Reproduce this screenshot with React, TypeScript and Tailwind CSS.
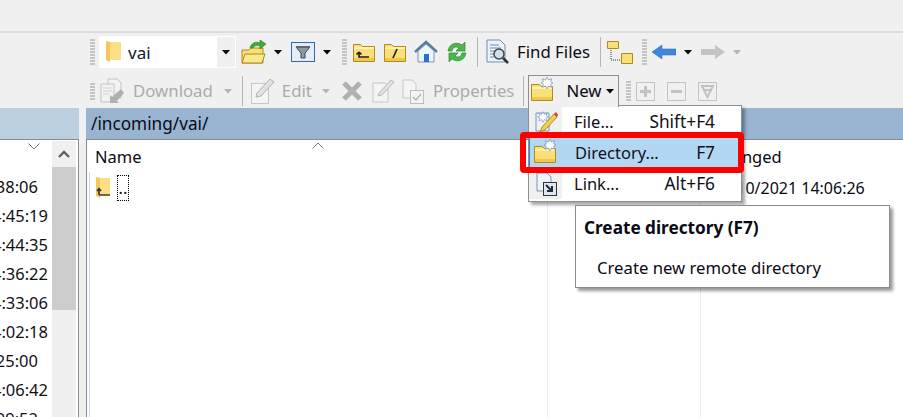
import React from "react";

const Y = { fill: "#f9e27f", stroke: "#b08a1e" };

function Gripper({ h = 26, cls = "" }: { h?: number; cls?: string }) {
  const n = Math.floor(h / 3);
  return (
    <div className={"flex flex-col gap-[1px] w-[5px] shrink-0 " + cls}>
      {Array.from({ length: n }).map((_, i) => (
        <div key={i} className="h-[2px] w-[5px] bg-[#c4c4c4]" />
      ))}
    </div>
  );
}
const Caret = ({ cls = "", dis = false }: { cls?: string; dis?: boolean }) => (
  <svg width="8" height="5" viewBox="0 0 8 5" className={"shrink-0 " + cls}>
    <path d="M0 0h8L4 4.500z" fill={dis ? "#b4b4b4" : "#000"} />
  </svg>
);
const Sep = ({ cls = "" }: { cls?: string }) => <div className={"w-[1px] h-[30px] bg-[#b5b5b5] shrink-0 " + cls} />;

function YFolder({ w = 22, h = 19, cls = "", children }: { w?: number; h?: number; cls?: string; children?: React.ReactNode }) {
  return (
    <svg width={w} height={h} viewBox="0 0 22 19" className={"shrink-0 " + cls}>
      <path d="M.5 18.500V1.500h7l2 2h12v15z" fill="#f8df78" stroke={Y.stroke} />
      <rect x="1" y="4" width="20" height="2" fill="#fff2b0" />
      <rect x="1" y="15" width="20" height="3" fill="#efc94f" />
      {children}
    </svg>
  );
}
const Win = ({ cls = "" }: { cls?: string }) => (
  <svg width="15" height="22" viewBox="0 0 15 22" className={"shrink-0 " + cls}>
    <path d="M3 1h12v18H3z" fill="#fcdf85" />
    <path d="M0 0l4 1v20l-4-2z" fill="#f4c65c" />
  </svg>
);
const Star = ({ x, y, s = 1 }: { x: number; y: number; s?: number }) => (
  <path
    transform={`translate(${x} ${y}) scale(${s})`}
    d="M0-7L1.800-3.500 5.500-5 4.200-1.500 7 0 4.200 1.500 5.500 5 1.800 3.500 0 7-1.800 3.500-5.500 5-4.200 1.500-7 0-4.200-1.500-5.500-5-1.800-3.500z"
    fill="#fff"
    stroke="#7c93b6"
    strokeWidth="0.9"
  />
);
const NewFolder = ({ cls = "" }: { cls?: string }) => (
  <svg width="24" height="26" viewBox="0 0 24 26" className={"shrink-0 " + cls}>
    <path d="M.5 24.500V8.500h8l2 2h11v14z" fill="#f8df78" stroke={Y.stroke} />
    <rect x="1" y="11" width="20" height="2" fill="#fff2b0" />
    <rect x="1" y="21" width="20" height="3" fill="#efc94f" />
    <Star x={16} y={7} s={0.85} />
  </svg>
);
const DisBox = ({ children, cls = "" }: { children: React.ReactNode; cls?: string }) => (
  <svg width="19" height="19" viewBox="0 0 19 19" className={"shrink-0 " + cls}>
    <rect x=".5" y=".5" width="18" height="18" fill="#f0f0f0" stroke="#c2c2c2" />
    {children}
  </svg>
);

function Row1() {
  return (
    <div className="flex items-center h-[38px] pl-[90px]">
      <Gripper h={27} />
      <div className="ml-[4px] w-[137px] h-[32px] bg-white flex items-center border border-white">
        <Win cls="ml-[6px]" />
        <span className="ml-[7px] text-[17px] leading-none text-[#101828]">vai</span>
        <div className="ml-auto w-[18px] h-full bg-[#f0f0f0] flex items-center justify-center">
          <Caret />
        </div>
      </div>
      <svg width="25" height="24" viewBox="0 0 25 24" className="ml-[5px] shrink-0">
        <path d="M1 23V10h7l2-2h12v15z" fill="#f8df78" stroke={Y.stroke} />
        <path d="M1 23l3-9h20l-3 9z" fill="#fbe88f" stroke={Y.stroke} />
        <path d="M9 8c1-5 6-7 10-5V0l6 4-6 5V6c-4-1-6 0-7 2z" fill="#43a83c" stroke="#2b7d27" strokeWidth=".6" />
      </svg>
      <Caret cls="ml-[8px]" />
      <svg width="24" height="20" viewBox="0 0 24 20" className="ml-[9px] shrink-0">
        <rect x=".5" y=".5" width="23" height="19" fill="#e4ecf6" stroke="#2f6cb5" />
        <path d="M5 5h14l-5 6v5h-4v-5z" fill="#8d9aa6" stroke="#3d4650" />
        <rect x="5" y="4" width="14" height="2" fill="#5d6873" />
      </svg>
      <Caret cls="ml-[8px]" />
      <Gripper h={27} cls="ml-[11px]" />
      <YFolder cls="ml-[6px]">
        <path d="M6 9v5h10M6 9l-2.500 2.500M6 9l2.500 2.500" stroke="#222" strokeWidth="1.700" fill="none" />
      </YFolder>
      <YFolder cls="ml-[9px]">
        <path d="M9 15l4-9" stroke="#222" strokeWidth="1.700" />
      </YFolder>
      <svg width="24" height="24" viewBox="0 0 24 24" className="ml-[8px] shrink-0">
        <path d="M1 12L12 2l11 10" fill="none" stroke="#5b7a9c" strokeWidth="2.500" />
        <path d="M4 11l8-7 8 7v11H4z" fill="#eef4fb" stroke="#7c93b0" />
        <rect x="10" y="14" width="5" height="8" fill="#2a6fd0" />
      </svg>
      <svg width="22" height="24" viewBox="0 0 22 24" className="ml-[8px] shrink-0">
        <path d="M2 11C3 4 10 1 16 5l3-3v9h-9l3-3C10 6 7 7 6 11z" fill="#4cb84a" stroke="#2a8a2e" strokeWidth=".7" />
        <path d="M20 13c-1 7-8 10-14 6l-3 3v-9h9l-3 3c3 2 6 1 7-3z" fill="#4cb84a" stroke="#2a8a2e" strokeWidth=".7" />
      </svg>
      <Sep cls="ml-[9px]" />
      <svg width="24" height="26" viewBox="0 0 24 26" className="ml-[8px] shrink-0">
        <path d="M1 1h13l5 5v17H1z" fill="#eef3fa" stroke="#6e8cb5" />
        <path d="M4 6h9M4 9h11M4 12h5M4 15h4M4 18h4" stroke="#6e8cb5" />
        <circle cx="13" cy="15" r="5" fill="#cfe0ee" stroke="#444" strokeWidth="1.500" />
        <path d="M17 19l5 5" stroke="#333" strokeWidth="2.500" />
      </svg>
      <span className="ml-[7px] text-[16.800px] leading-none text-[#0c0c14] whitespace-nowrap">Find Files</span>
      <Sep cls="ml-[10px]" />
      <svg width="26" height="25" viewBox="0 0 26 25" className="ml-[6px] shrink-0">
        <path d="M.5 1.500h11v7h-11z" fill="#f8df78" stroke={Y.stroke} />
        <path d="M14.500 13.500h11v10h-11z" fill="#f8df78" stroke={Y.stroke} />
        <path d="M4 10v10h9" fill="none" stroke="#333" strokeDasharray="1 1" />
      </svg>
      <Gripper h={27} cls="ml-[9px]" />
      <svg width="24" height="16" viewBox="0 0 24 16" className="ml-[5px] shrink-0">
        <path d="M0 8l10-7v4h14v6H10v4z" fill="#3f86e0" stroke="#2b62b0" strokeWidth=".5" />
      </svg>
      <Caret cls="ml-[8px]" />
      <svg width="24" height="16" viewBox="0 0 24 16" className="ml-[9px] shrink-0">
        <path d="M24 8l-10-7v4H0v6h14v4z" fill="#c4c4c4" />
      </svg>
      <Caret dis cls="ml-[8px]" />
    </div>
  );
}

function Row2() {
  return (
    <div className="flex items-center h-[37px] pl-[90px] pt-[3px] relative">
      <Gripper h={20} />
      <svg width="24" height="26" viewBox="0 0 24 26" className="ml-[5px] shrink-0">
        <path d="M8 1h9l4 4v15H8z" fill="#f2f2f2" stroke="#c2c2c2" />
        <path d="M1 6h13v18H1z" fill="#f2f2f2" stroke="#c2c2c2" />
        <path d="M3 10h9M3 13h9M3 16h6" stroke="#cfcfcf" />
        <path d="M21 11l-9 8-2-2v8h9l-2-2 7-8z" fill="#b0b0b0" />
      </svg>
      <span className="ml-[9px] text-[16.800px] leading-none text-[#ababab]">Download</span>
      <Caret dis cls="ml-[11px]" />
      <Sep cls="ml-[10px]" />
      <svg width="24" height="26" viewBox="0 0 24 26" className="ml-[8px] shrink-0">
        <rect x=".5" y="5.500" width="17" height="20" fill="#f4f4f4" stroke="#c6c6c6" />
        <path d="M5 19l1-4L19 1l4 3L10 18z" fill="#e2e2e2" stroke="#b0b0b0" />
      </svg>
      <span className="ml-[7px] text-[16.800px] leading-none text-[#ababab]">Edit</span>
      <Caret dis cls="ml-[10px]" />
      <svg width="22" height="22" viewBox="0 0 22 22" className="ml-[11px] shrink-0">
        <path d="M3 3l16 16M19 3L3 19" stroke="#b0b0b0" strokeWidth="5" />
      </svg>
      <svg width="23" height="26" viewBox="0 0 23 26" className="ml-[9px] shrink-0">
        <path d="M1 5h12l3 3v16H1z" fill="#f4f4f4" stroke="#c6c6c6" />
        <path d="M6 18l1-3L19 2l3 2L10 17z" fill="#e2e2e2" stroke="#b8b8b8" />
      </svg>
      <svg width="22" height="25" viewBox="0 0 22 25" className="ml-[7px] shrink-0">
        <path d="M1 1h9l4 4v14H1z" fill="#f4f4f4" stroke="#c6c6c6" />
        <rect x="8.500" y="11.500" width="13" height="13" fill="#f4f4f4" stroke="#bdbdbd" />
        <path d="M11 18l3 3 5-6" fill="none" stroke="#b0b0b0" strokeWidth="1.300" />
      </svg>
      <span className="ml-[9px] text-[16.800px] leading-none text-[#ababab]">Properties</span>
      <Sep cls="ml-[9px]" />
      <div className="ml-[4px] w-[91px] h-[32px] self-start mt-[1px] border border-b-0 border-[#8f8f8f] bg-[#f0f0f0] flex items-center relative z-20">
        <NewFolder cls="ml-[2px] mb-[6px]" />
        <span className="ml-[11px] text-[16.800px] leading-none text-[#0a0a14]">New</span>
        <Caret cls="ml-[4px]" />
      </div>
      <Gripper h={21} cls="ml-[7px]" />
      <DisBox cls="ml-[5px]">
        <path d="M9.500 4v11M4 9.500h11" stroke="#c2c2c2" strokeWidth="3" />
      </DisBox>
      <DisBox cls="ml-[12px]">
        <path d="M4 9.500h11" stroke="#c2c2c2" strokeWidth="3" />
      </DisBox>
      <DisBox cls="ml-[12px]">
        <path d="M4 4h11L9.500 15zM6 8h7" fill="none" stroke="#c2c2c2" strokeWidth="2" />
      </DisBox>
    </div>
  );
}

const times = [
  { t: "14:38:06", short: true },
  { t: "14:45:19", short: false },
  { t: "14:44:35", short: false },
  { t: "14:36:22", short: false },
  { t: "14:33:06", short: false },
  { t: "14:02:18", short: false },
  { t: "14:25:00", short: true },
  { t: "14:06:42", short: false },
  { t: "14:09:52", short: true },
];

function LeftPanel() {
  return (
    <div className="w-[79px] shrink-0 flex flex-col h-full">
      <div className="h-[31px] bg-[#bccfdf]" />
      <div className="flex-1 bg-white border-t border-r border-[#8a8a8a] flex overflow-hidden">
        <div className="w-[52px] shrink-0 relative overflow-hidden">
          <svg width="12" height="7" viewBox="0 0 12 7" className="ml-[28px] mt-[3px]">
            <path d="M.500.500L6 6l5.500-5.500" fill="none" stroke="#777" />
          </svg>
          <div className="mt-[23px] flex flex-col items-end pr-[4px]">
            {times.map((r) => (
              <div
                key={r.t}
                className={"h-[29px] leading-[28px] text-[16.500px] text-[#101018] whitespace-nowrap " + (r.short ? "mr-[10px]" : "")}
              >
                {r.t}
              </div>
            ))}
          </div>
        </div>
        <div className="w-[24px] shrink-0 bg-[#f0f0f0] mt-[1px] flex flex-col">
          <div className="h-[26px] flex items-center justify-center">
            <svg width="12" height="8" viewBox="0 0 12 8">
              <path d="M1 7l5-5 5 5" fill="none" stroke="#606060" strokeWidth="2.400" />
            </svg>
          </div>
          <div className="h-[143px] bg-[#cdcdcd]" />
        </div>
      </div>
    </div>
  );
}

function RightPanel() {
  return (
    <div className="flex-1 flex flex-col h-full min-w-0">
      <div className="h-[31px] bg-[#99b4d1] flex items-center pl-[5px] text-[17.200px] text-[#0a0a14]">/incoming/vai/</div>
      <div className="flex-1 bg-white border-t border-l border-[#8a8a8a] flex">
        <div className="w-[461px] shrink-0 border-r border-[#eaeef4] relative pl-[8px]">
          <svg width="12" height="7" viewBox="0 0 12 7" className="absolute left-[225px] top-[2px]">
            <path d="M.500 6.500L6 1l5.500 5.500" fill="none" stroke="#777" />
          </svg>
          <div className="h-[33px] flex items-center pt-[2px] text-[16.500px] text-[#0a0a14]">Name</div>
          <div className="absolute left-[2px] top-[32px] bottom-0 w-[1px] bg-[#c6d9f1]" />
          <div className="flex items-center h-[30px]">
            <svg width="15" height="22" viewBox="0 0 15 22" className="ml-[1px] shrink-0">
              <path d="M3 1h11v17H3z" fill="#fcdf85" />
              <path d="M0 0l4 1v20l-4-2z" fill="#f4c65c" />
              <path d="M3 18v-6M1 14l2-2.500L5 14M3 18h11" stroke="#3a3a3a" strokeWidth="1.700" fill="none" />
            </svg>
            <div className="ml-[6px] w-[12px] h-[26px] border border-dotted border-black text-[16.500px] leading-[24px] text-[#101018] text-center">..</div>
          </div>
        </div>
        <div className="w-[153px] shrink-0 border-r border-[#eaeef4]" />
        <div className="pl-[11px] text-[#0a0a14] whitespace-nowrap">
          <div className="h-[33px] flex items-center pt-[2px] text-[16.500px]">Changed</div>
          <div className="h-[30px] flex items-center text-[16px]">10/10/2021 14:06:26</div>
        </div>
      </div>
    </div>
  );
}

function MenuRow({ icon, label, keys, active = false }: { icon: React.ReactNode; label: string; keys: string; active?: boolean }) {
  return (
    <div className={"flex items-center h-[31px] pb-[1px] text-[16.500px] text-[#101018] relative " + (active ? "bg-[#b3d7f3] border-l border-[#3d7fc4]" : "")}>
      <div className={"w-[33px] h-full flex items-center justify-center shrink-0 " + (active ? "" : "bg-[#f0f0f0]")}>{icon}</div>
      <span className="ml-[12px]">{label}</span>
      <span className="ml-auto mr-[26px] text-[17.300px]">{keys}</span>
    </div>
  );
}

function Menu() {
  return (
    <div className="absolute left-[528px] top-[105px] w-[214px] h-[97px] bg-white border border-[#8f8f8f] shadow-[3px_3px_3px_rgba(0,0,0,0.35)] z-10 py-[1px]">
      <MenuRow
        label="File..."
        keys="Shift+F4"
        icon={
          <svg width="24" height="24" viewBox="0 0 24 24">
            <path d="M2 3h13v18H2z" fill="#eef3fa" stroke="#7c93b6" />
            <Star x={9} y={7} s={0.75} />
            <path d="M6 22l2-5L20 4l3 3-12 13z" fill="#f5cf45" stroke="#8a6a10" strokeWidth=".7" />
            <path d="M20 4l2-2 2 3-1 2z" fill="#e0352b" />
          </svg>
        }
      />
      <MenuRow active label="Directory..." keys="F7" icon={<NewFolder cls="mb-[4px] mr-[2px]" />} />
      <MenuRow
        label="Link..."
        keys="Alt+F6"
        icon={
          <svg width="22" height="24" viewBox="0 0 22 24">
            <path d="M2 1h10l4 4v14H2z" fill="#eef3fa" stroke="#7c93b6" />
            <rect x="8.500" y="10.500" width="13" height="13" fill="#dfe8f2" stroke="#333" />
            <path d="M11 13l6 6M17 14v5h-5" fill="none" stroke="#1f2c3c" strokeWidth="2" />
          </svg>
        }
      />
    </div>
  );
}

export default function App() {
  return (
    <div
      className="relative w-[903px] h-[417px] overflow-hidden bg-[#f0f0f0] flex flex-col"
      style={{ fontFamily: '"Noto Sans", "Open Sans", sans-serif' }}
    >
      <div className="h-[33px] shrink-0 border-b-2 border-[#dcdcdc]" />
      <Row1 />
      <Row2 />
      <div className="flex-1 flex gap-[7px] min-h-0">
        <LeftPanel />
        <RightPanel />
      </div>
      <Menu />
      <div className="absolute left-[520px] top-[132px] w-[224px] h-[41px] border-[6px] border-[#ff0000] rounded-[4px] z-20" />
      <div className="absolute left-[575px] top-[205px] w-[315px] h-[83px] bg-white border border-[#8a8a8a] shadow-[3px_3px_3px_rgba(0,0,0,0.4)] z-30 text-[#0a0a14]">
        <div className="absolute left-[8px] top-[9px] text-[17.200px] font-bold whitespace-nowrap">Create directory (F7)</div>
        <div className="absolute left-[21px] top-[49px] text-[16.700px] whitespace-nowrap">Create new remote directory</div>
      </div>
    </div>
  );
}
